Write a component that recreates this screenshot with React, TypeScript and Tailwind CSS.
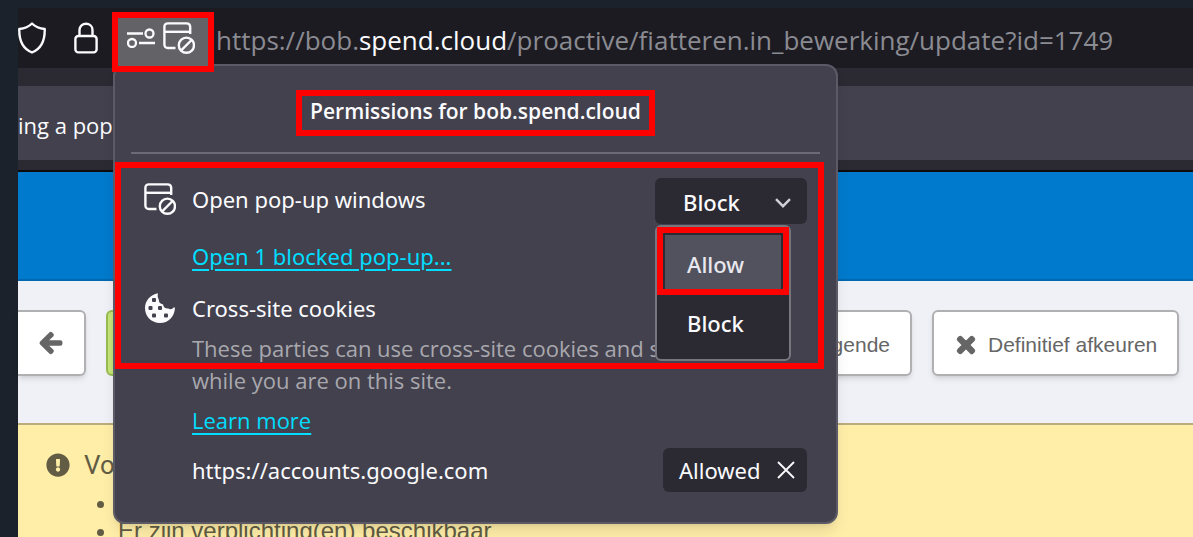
import { useState } from 'react'
import { FaArrowLeft, FaExclamationCircle, FaTimes } from 'react-icons/fa'

type Permission = 'Allow' | 'Block'

const options: Permission[] = ['Allow', 'Block']

function ShieldIcon() {
  return (
    <svg viewBox="0 0 28 32" className="w-7 h-8 shrink-0" fill="none" stroke="#fbfbfe" strokeWidth="2.4" strokeLinejoin="round">
      <path d="M14 1.500 C17 4.500 22 6.500 26.700 7 C27 18 23 27 14 30.500 C5 27 1 18 1.300 7 C6 6.500 11 4.500 14 1.500 Z" />
    </svg>
  )
}

function LockIcon() {
  return (
    <svg viewBox="0 0 24 32" className="w-6 h-8 shrink-0" fill="none" stroke="#fbfbfe" strokeWidth="2.4">
      <rect x="1.400" y="14" width="21.200" height="16.400" rx="3" />
      <path d="M5.500 14 V8 C5.500 -0.300 18.500 -0.300 18.500 8 V14" />
    </svg>
  )
}

function SettingsIcon() {
  return (
    <svg viewBox="0 0 28 20" className="w-7 h-5 shrink-0" fill="none" stroke="#fbfbfe" strokeWidth="2.300">
      <path d="M0 5.500 H16 M12 15 H28" />
      <circle cx="22.500" cy="5.500" r="4" />
      <circle cx="5" cy="15" r="4" />
    </svg>
  )
}

function PopupBlockedIcon() {
  return (
    <svg viewBox="0 0 32 32" className="w-8 h-8 shrink-0" fill="none" stroke="#fbfbfe" strokeWidth="2.400">
      <path d="M12.500 26 H5 C2.500 26 1.400 24.500 1.400 22.500 V5 C1.400 2.500 2.500 1.400 5 1.400 H23.500 C26 1.400 27.200 2.500 27.200 5 V12" />
      <path d="M1.400 9.800 H27.200" />
      <circle cx="23.400" cy="23.200" r="7.600" />
      <path d="M18.200 28.400 L28.600 18" />
    </svg>
  )
}

function CookieIcon() {
  return (
    <svg viewBox="0 0 32 32" className="w-8 h-8 shrink-0">
      <path
        fill="#fbfbfe"
        d="M14 1.200 C6 2.500 1 9 1 16 C1 24.500 7.500 31 16 31 C24.500 31 30.500 25 31 15.500 L29.500 15.500 C28.500 17.500 25.500 17.800 24 16.200 C21.500 17 19 15 19.200 12.500 C16 12 14.500 10 14.800 7.500 C13.500 5.800 13.500 3 14 1.200 Z"
      />
      <g fill="#42414d">
        <rect x="8" y="6" width="4" height="4" rx="1" />
        <rect x="4.500" y="14" width="4" height="4" rx="1" />
        <rect x="14" y="14" width="4" height="4" rx="1" />
        <rect x="8" y="21.500" width="4" height="4" rx="1" />
        <rect x="20" y="21.500" width="4" height="4" rx="1" />
      </g>
    </svg>
  )
}

function PermissionsPopup() {
  const [permission, setPermission] = useState<Permission>('Block')

  return (
    <div className="absolute left-[113px] top-16 w-[725px] rounded-xl border-2 border-[#5b5a66] bg-[#42414d] px-4 pb-[30px] font-['Noto_Sans',sans-serif] text-[22px] leading-8 text-[#fbfbfe] shadow-lg">
      <div className="flex h-[86px] items-center justify-center pt-2">
        <h1 className="border-6 border-[#ff0000] px-2 pb-1 font-['Open_Sans',sans-serif] text-[21px] font-semibold leading-[30px]">
          Permissions for bob.spend.cloud
        </h1>
      </div>
      <hr className="border-t-2 border-[#6b6a76]" />

      <div className="px-[13px]">
        <div className="relative mt-6 flex h-[46px] items-center gap-4">
          <div className="-mt-1 flex flex-1 items-center gap-4">
            <PopupBlockedIcon />
            <label htmlFor="popup-permission">Open pop-up windows</label>
          </div>
          <div className="relative">
            <select
              id="popup-permission"
              value={permission}
              onChange={(event) => setPermission(event.target.value as Permission)}
              className="h-[46px] w-[152px] appearance-none rounded-md bg-[#2b2a33] pl-7 pt-0.5 font-medium"
            >
              {options.map((option) => (
                <option key={option}>{option}</option>
              ))}
            </select>
            <svg viewBox="0 0 16 10" className="pointer-events-none absolute right-4 top-5 h-2.5 w-4" fill="none" stroke="#d0d0d6" strokeWidth="2.400">
              <path d="M1 1.200 L8 8.200 L15 1.200" />
            </svg>
          </div>
          <div className="absolute right-4 top-[47px] z-10 w-[136px] rounded-md border-2 border-[#77767f] bg-[#2b2a33] pb-2 font-medium">
            <div className="border-6 border-[#ff0000] px-0.5 pt-0.5">
              <button onClick={() => setPermission('Allow')} className="h-[54px] w-full bg-[#52525e] pl-[22px] pt-1 text-left text-[#e8e8ee]">
                Allow
              </button>
            </div>
            <button onClick={() => setPermission('Block')} className="h-14 w-full pl-[30px] text-left">
              Block
            </button>
          </div>
        </div>
        <div className="ml-12 mt-4">
          <a href="#popups" className="text-[#00ddff] underline decoration-2 underline-offset-4">Open 1 blocked pop-up...</a>
        </div>

        <div className="mt-5 flex items-center gap-4">
          <CookieIcon />
          <h2>Cross-site cookies</h2>
        </div>
        <p className="ml-12 mt-2 font-['Open_Sans',sans-serif] text-[#a9a8ae]">
          These parties can use cross-site cookies and s
          <br />
          while you are on this site.
        </p>
        <div className="ml-12 mt-2 font-['Open_Sans',sans-serif]">
          <a href="#learn" className="text-[#00ddff] underline decoration-2 underline-offset-4">Learn more</a>
        </div>
        <div className="ml-12 mt-3 flex items-center justify-between">
          <span>https://accounts.google.com</span>
          <button className="flex h-11 w-36 items-center justify-between rounded-md bg-[#2b2a33] pl-4 pr-3">
            Allowed
            <svg viewBox="0 0 18 18" className="h-[18px] w-[18px]" stroke="#fbfbfe" strokeWidth="1.800">
              <path d="M1 1 L17 17 M17 1 L1 17" />
            </svg>
          </button>
        </div>
      </div>

      <div className="pointer-events-none absolute left-0 right-3 top-24 h-[207px] border-6 border-[#ff0000]" />
    </div>
  )
}

export default function App() {
  return (
    <div className="relative flex h-screen flex-col overflow-hidden bg-[#1b222c] pl-[18px] pt-2 font-['Open_Sans',sans-serif]">
      <header className="flex h-[60px] shrink-0 items-center bg-[#1c1b22]">
        <ShieldIcon />
        <div className="ml-7">
          <LockIcon />
        </div>
        <button aria-label="Permissions" className="relative z-10 ml-3.5 mt-2 flex h-[60px] w-[102px] shrink-0 items-center justify-center gap-2 border-6 border-[#ff0000] bg-[#636267] pb-2 pr-1">
          <SettingsIcon />
          <PopupBlockedIcon />
        </button>
        <div className="ml-0.5 mt-1 whitespace-nowrap text-[26px] text-[#8b8b92]">
          https://bob.<span className="text-[#fbfbfe]">spend.cloud</span>/proactive/fiatteren.in_bewerking/update?id=1749
        </div>
      </header>
      <div className="shrink-0 border-b-2 border-[#0c0c0d] bg-[#2b2a33] pb-2.5 pt-[18px]">
        <div className="flex h-[74px] items-center bg-[#42414d] pt-1 text-[22px] text-[#fbfbfe]">ing a pop</div>
      </div>

      <main className="flex flex-1 flex-col bg-[#f0f1f6] font-['Liberation_Sans',sans-serif] text-[#666666]">
        <div className="h-[109px] shrink-0 border-b-2 border-[#0068b0] bg-[#007acc]" />
        <div className="flex shrink-0 gap-5 pb-[47px] pt-[29px] text-[21px]">
          <button aria-label="Terug" className="flex h-[66px] w-[68px] items-center justify-center rounded-md rounded-l-none border-2 border-l-0 border-[#b0b0b3] bg-white shadow-md">
            <FaArrowLeft className="size-6" strokeWidth={40} stroke="currentColor" />
          </button>
          <button aria-label="Goedkeuren" className="h-[66px] w-[460px] rounded-md border-2 border-[#98bd52] bg-[#c6e579]" />
          <button className="flex h-[66px] w-[326px] items-center justify-end rounded-md border-2 border-[#b0b0b3] bg-white pr-5 pt-1 shadow-md">
            gende
          </button>
          <button className="flex h-[66px] items-center gap-2.5 rounded-md border-2 border-[#b0b0b3] bg-white px-5 pt-1 shadow-md">
            <FaTimes className="size-6" strokeWidth={40} stroke="currentColor" />
            Definitief afkeuren
          </button>
        </div>
        <section className="flex-1 border-t-2 border-[#b9ad7c] bg-[#ffeea8] pl-7 pt-6 text-[#625c44]">
          <h2 className="flex items-center gap-3.5 font-['Roboto',sans-serif] text-[26px] leading-8">
            <FaExclamationCircle className="size-6" />
            Vo
          </h2>
          <ul className="list-disc pl-[72px] pt-2 text-[24px] leading-7">
            <li>&nbsp;</li>
            <li>Er zijn verplichting(en) beschikbaar</li>
          </ul>
        </section>
      </main>

      <PermissionsPopup />
    </div>
  )
}
